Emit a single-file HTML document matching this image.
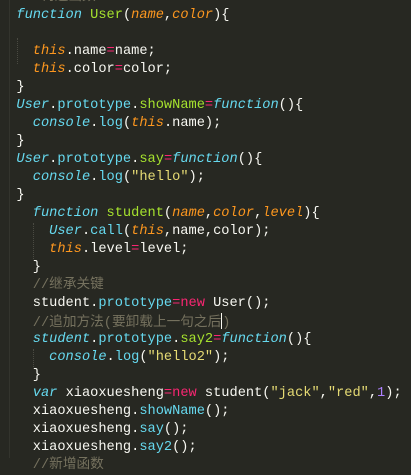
<!DOCTYPE html>
<html><head><meta charset="utf-8"><style>
html,body{margin:0;padding:0;width:411px;height:458px;overflow:hidden;background:#272822;}
.c{position:absolute;left:0;top:-11px;font-family:"Liberation Mono","Noto Sans CJK SC",monospace;font-size:13.67px;line-height:18px;color:#f8f8f2;}
.l{height:18px;white-space:pre;}
.k{color:#66d9ef;font-style:italic}
.s{color:#66d9ef}
.g{color:#a6e22e}
.p{color:#fd971f;font-style:italic}
.o{color:#f92672}
.t{color:#e6db74}
.n{color:#ae81ff}
.m{color:#75715e}
.cur{display:inline-block;width:1px;height:16px;background:#f8f8f0;vertical-align:-3px}
.gd{position:absolute;width:0;border-left:1px dotted #4a4a42}
</style></head><body>
<div class="gd" style="left:17px;top:38px;height:26px"></div>
<div class="gd" style="left:33px;top:223px;height:36px"></div>
<div class="gd" style="left:33px;top:349px;height:18px"></div>
<div class="gd" style="left:9px;top:0;height:458px;border-left:1px solid #33342d"></div>
<div class="c"><div class="l">  <span class="m">// 构造函数</span></div><div class="l">  <span class="k">function</span> <span class="g">User</span>(<span class="p">name</span>,<span class="p">color</span>){</div><div class="l"> </div><div class="l">    <span class="p">this</span>.name<span class="o">=</span>name;</div><div class="l">    <span class="p">this</span>.color<span class="o">=</span>color;</div><div class="l">  }</div><div class="l">  <span class="k">User</span>.<span class="s">prototype</span>.<span class="g">showName</span><span class="o">=</span><span class="k">function</span>(){</div><div class="l">    <span class="k">console</span>.<span class="s">log</span>(<span class="p">this</span>.name);</div><div class="l">  }</div><div class="l">  <span class="k">User</span>.<span class="s">prototype</span>.<span class="g">say</span><span class="o">=</span><span class="k">function</span>(){</div><div class="l">    <span class="k">console</span>.<span class="s">log</span>(<span class="t">"hello"</span>);</div><div class="l">  }</div><div class="l">    <span class="k">function</span> <span class="g">student</span>(<span class="p">name</span>,<span class="p">color</span>,<span class="p">level</span>){</div><div class="l">      <span class="k">User</span>.<span class="s">call</span>(<span class="p">this</span>,name,color);</div><div class="l">      <span class="p">this</span>.level<span class="o">=</span>level;</div><div class="l">    }</div><div class="l">    <span class="m">//继承关键</span></div><div class="l">    student.<span class="s">prototype</span><span class="o">=</span><span class="o">new</span> User();</div><div class="l">    <span class="m">//追加方法(要卸载上一句之后<span class="cur"></span>)</span></div><div class="l">    <span class="k">student</span>.<span class="s">prototype</span>.<span class="g">say2</span><span class="o">=</span><span class="k">function</span>(){</div><div class="l">      <span class="k">console</span>.<span class="s">log</span>(<span class="t">"hello2"</span>);</div><div class="l">    }</div><div class="l">    <span class="k">var</span> xiaoxuesheng<span class="o">=</span><span class="o">new</span> student(<span class="t">"jack"</span>,<span class="t">"red"</span>,<span class="n">1</span>);</div><div class="l">    xiaoxuesheng.<span class="s">showName</span>();</div><div class="l">    xiaoxuesheng.<span class="s">say</span>();</div><div class="l">    xiaoxuesheng.<span class="s">say2</span>();</div><div class="l">    <span class="m">//新增函数</span></div></div>
</body></html>
